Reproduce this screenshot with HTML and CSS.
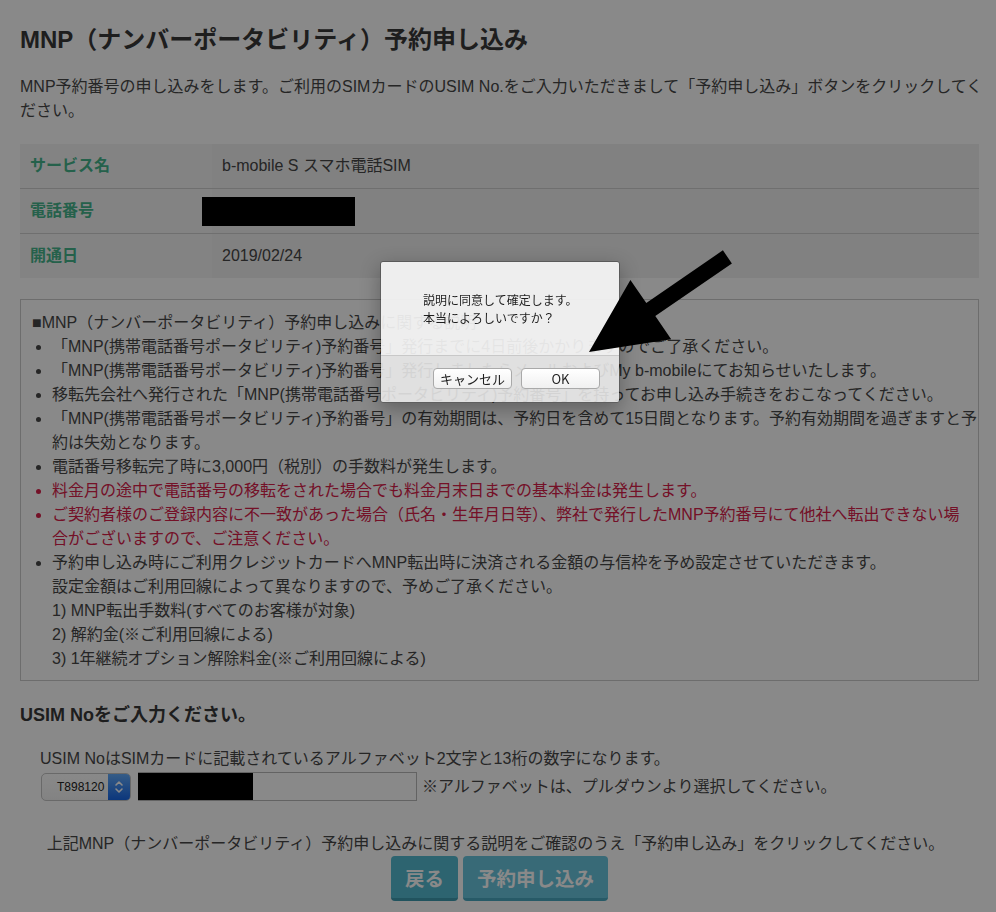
FILE: index.html
```html
<!DOCTYPE html>
<html lang="ja">
<head>
<meta charset="utf-8">
<title>MNP予約申し込み</title>
<link rel="stylesheet" href="styles.css">
</head>
<body>
<main class="page">
  <h1 class="title">MNP（ナンバーポータビリティ）予約申し込み</h1>
  <p class="lead">MNP予約番号の申し込みをします。ご利用のSIMカードのUSIM No.をご入力いただきまして「予約申し込み」ボタンをクリックしてください。</p>

  <table class="info">
    <tr><th>サービス名</th><td>b-mobile S スマホ電話SIM</td></tr>
    <tr><th>電話番号</th><td><span class="redact redact-phone"></span></td></tr>
    <tr><th>開通日</th><td>2019/02/24</td></tr>
  </table>

  <div class="notice">
    <p class="notice-title">■MNP（ナンバーポータビリティ）予約申し込みに関する説明</p>
    <ul class="notice-list">
      <li>「MNP(携帯電話番号ポータビリティ)予約番号」発行までに4日前後かかりますのでご了承ください。</li>
      <li>「MNP(携帯電話番号ポータビリティ)予約番号」発行しましたらメールおよびMy b-mobileにてお知らせいたします。</li>
      <li>移転先会社へ発行された「MNP(携帯電話番号ポータビリティ)予約番号」を持ってお申し込み手続きをおこなってください。</li>
      <li>「MNP(携帯電話番号ポータビリティ)予約番号」の有効期間は、予約日を含めて15日間となります。予約有効期間を過ぎますと予約は失効となります。</li>
      <li>電話番号移転完了時に3,000円（税別）の手数料が発生します。</li>
      <li class="warn">料金月の途中で電話番号の移転をされた場合でも料金月末日までの基本料金は発生します。</li>
      <li class="warn">ご契約者様のご登録内容に不一致があった場合（氏名・生年月日等）、弊社で発行したMNP予約番号にて他社へ転出できない場<br>合がございますので、ご注意ください。</li>
      <li>予約申し込み時にご利用クレジットカードへMNP転出時に決済される金額の与信枠を予め設定させていただきます。<br>設定金額はご利用回線によって異なりますので、予めご了承ください。<br>1) MNP転出手数料(すべてのお客様が対象)<br>2) 解約金(※ご利用回線による)<br>3) 1年継続オプション解除料金(※ご利用回線による)</li>
    </ul>
  </div>

  <h2 class="sub">USIM Noをご入力ください。</h2>
  <div class="usim">
    <p class="usim-text">USIM NoはSIMカードに記載されているアルファベット2文字と13桁の数字になります。</p>
    <div class="usim-row">
      <div class="select">
        <span class="select-value">T898120</span>
        <span class="select-arrow">
          <svg width="10" height="16" viewBox="0 0 10 16"><path d="M2 6 L5 3 L8 6 M2 10 L5 13 L8 10" fill="none" stroke="#fff" stroke-width="1.6" stroke-linecap="round" stroke-linejoin="round"/></svg>
        </span>
      </div>
      <div class="field"><span class="redact redact-usim"></span></div>
      <span class="hint">※アルファベットは、プルダウンより選択してください。</span>
    </div>
  </div>

  <p class="confirm">上記MNP（ナンバーポータビリティ）予約申し込みに関する説明をご確認のうえ「予約申し込み」をクリックしてください。</p>
  <div class="actions">
    <button class="btn btn-back">戻る</button>
    <button class="btn btn-apply">予約申し込み</button>
  </div>
</main>

<div class="overlay"></div>

<div class="dialog">
  <div class="dialog-body">
    <p class="dialog-text">説明に同意して確定します。<br>本当によろしいですか？</p>
  </div>
  <div class="dialog-foot">
    <button class="dbtn">キャンセル</button>
    <button class="dbtn">OK</button>
  </div>
</div>

<svg class="arrow" width="996" height="912" viewBox="0 0 996 912">
  <polygon points="589,352 671.2,339.2 655.3,316.1 731.9,263.5 722.9,250.3 646.3,302.9 630.4,279.9" fill="#000"/>
</svg>
</body>
</html>
```

FILE: styles.css
```css
html, body {
  margin: 0;
  padding: 0;
}

body {
  background: #fff;
  color: #474747;
  font-family: "Liberation Sans", "Noto Sans CJK JP", sans-serif;
  font-size: 16px;
  line-height: 24px;
  width: 996px;
  height: 912px;
  overflow: hidden;
}

.page {
  padding: 25px 17px 0 20px;
}

.title {
  margin: 0;
  font-size: 24px;
  line-height: 30px;
  font-weight: bold;
  color: #383838;
}

.lead {
  margin: 20px -5px 21px 0;
}

.info {
  width: 100%;
  border-collapse: collapse;
  margin-bottom: 21px;
}

.info th,
.info td {
  padding: 10px;
  line-height: 24px;
  text-align: left;
  vertical-align: middle;
  border-bottom: 1px solid #cfcfcf;
}

.info tr:last-child th,
.info tr:last-child td {
  border-bottom: none;
}

.info th {
  width: 172px;
  background: #f4f4f4;
  color: #46b48c;
  font-weight: bold;
}

.info td {
  background: #f0f0f0;
}

.redact {
  display: inline-block;
  background: #000;
  vertical-align: middle;
}

.redact-phone {
  width: 153px;
  height: 29px;
  margin-left: -20px;
  margin-top: -3px;
  margin-bottom: -3px;
}

.notice {
  border: 1px solid #cccccc;
  padding: 11px 0 9px 11px;
}

.notice-title {
  margin: 0;
}

.notice-list {
  margin: 0;
  padding-left: 20px;
}

.warn {
  color: #d8204a;
}

.sub {
  margin: 21px 0 0;
  font-size: 18px;
  line-height: 26px;
  font-weight: bold;
  color: #383838;
}

.usim {
  margin-top: 19px;
  padding-left: 20px;
}

.usim-text {
  margin: 0;
}

.usim-row {
  display: flex;
  align-items: center;
  margin-top: 1px;
  height: 29px;
}

.select {
  width: 90px;
  height: 28px;
  box-sizing: border-box;
  border: 1px solid #c4c4c4;
  border-radius: 5px;
  background: linear-gradient(#ffffff, #f3f3f3);
  display: flex;
  align-items: center;
  overflow: hidden;
  margin-left: 1px;
}

.select-value {
  flex: 1;
  padding-left: 15px;
  font-size: 12px;
  line-height: 14px;
  color: #222;
}

.select-arrow {
  width: 22px;
  height: 100%;
  background: linear-gradient(#64acfb, #1666e6);
  display: flex;
  align-items: center;
  justify-content: center;
}

.field {
  width: 279px;
  height: 29px;
  box-sizing: border-box;
  border: 1px solid #b8b8b8;
  background: #fff;
  margin-left: 7px;
  display: flex;
}

.redact-usim {
  width: 115px;
  height: 27px;
  margin-left: -1px;
}

.hint {
  margin-left: 5px;
}

.confirm {
  margin: 31px 0 0;
  text-align: center;
  padding-right: 8px;
}

.actions {
  display: flex;
  justify-content: center;
  gap: 5px;
}

.btn {
  height: 45px;
  padding: 0 14px;
  border: none;
  border-bottom: 3px solid #3f9ab0;
  border-radius: 4px;
  font-family: "Liberation Sans", "Noto Sans CJK JP", sans-serif;
  font-size: 19.5px;
  font-weight: bold;
  color: #fff;
}

.btn-back {
  background: #54bad1;
}

.btn-apply {
  background: #68c5de;
  border-bottom-color: #4aa8c0;
}

.overlay {
  position: fixed;
  inset: 0;
  background: rgba(0, 0, 0, 0.463);
}

.dialog {
  position: absolute;
  left: 380px;
  top: 261px;
  width: 240px;
  height: 142px;
  box-sizing: border-box;
  border: 1px solid rgba(0, 0, 0, 0.3);
  border-radius: 3px;
  box-shadow: 0 6px 20px rgba(0, 0, 0, 0.3);
  overflow: hidden;
  display: flex;
  flex-direction: column;
  font-family: "Noto Sans CJK JP", sans-serif;
  color: #1e1e1e;
}

.dialog-body {
  flex: 0 0 93px;
  box-sizing: border-box;
  background: rgba(250, 250, 250, 0.9);
  padding: 29px 0 0 42px;
}

.dialog-text {
  margin: 0;
  font-size: 12px;
  line-height: 18px;
}

.dialog-foot {
  flex: 1;
  background: rgba(236, 236, 236, 0.88);
  border-top: 1px solid rgba(0, 0, 0, 0.1);
  display: flex;
  justify-content: flex-end;
  align-items: flex-start;
  gap: 9px;
  padding: 12px 19px 0 0;
}

.dbtn {
  width: 79px;
  height: 21px;
  padding: 0;
  border: 1px solid #a9a9a9;
  border-radius: 4px;
  background: linear-gradient(#ffffff, #f0f0f0);
  font-family: "Noto Sans CJK JP", sans-serif;
  font-size: 13px;
  line-height: 19px;
  color: #1e1e1e;
}

.arrow {
  position: absolute;
  left: 0;
  top: 0;
  pointer-events: none;
}
```
